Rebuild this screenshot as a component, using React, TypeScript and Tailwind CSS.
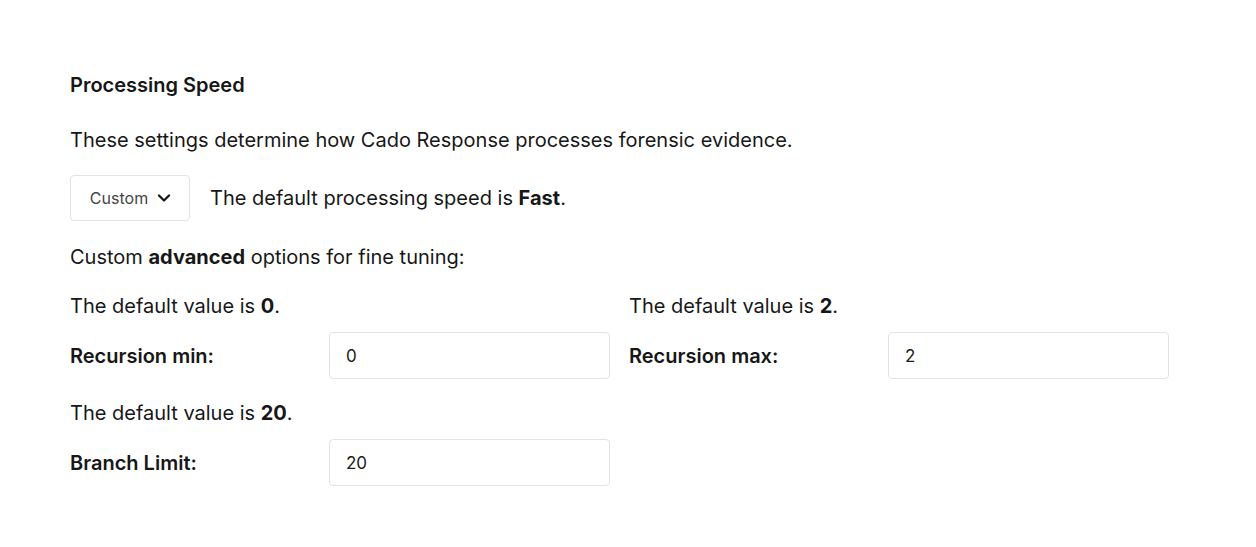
import { ChevronDown } from 'lucide-react';

function Field({ hint, label, value }: { hint: string; label: string; value: string }) {
  return (
    <div className="flex flex-col">
      <p className="leading-7">
        The default value is <span className="font-bold">{hint}</span>.
      </p>
      <div className="mt-3 flex items-center">
        <label className="w-[259px] shrink-0 font-semibold leading-7">{label}</label>
        <input
          readOnly
          value={value}
          className="h-[47px] w-[281px] shrink-0 rounded border border-[#e3e3e3] bg-white px-4 text-[17px] text-[#1b1b1b] outline-none"
        />
      </div>
    </div>
  );
}

export default function App() {
  return (
    <div className="min-h-[547px] bg-white px-[70px] pt-[71px] text-[20px] text-[#171717] font-['Inter',sans-serif]">
      <h2 className="font-semibold leading-7">Processing Speed</h2>
      <p className="mt-[27px] leading-7">These settings determine how Cado Response processes forensic evidence.</p>

      <div className="mt-[21px] flex items-center gap-5">
        <button className="flex h-[46px] w-[120px] items-center justify-center gap-[6px] rounded border border-[#e3e3e3] bg-white pl-1 text-[16px] text-[#444]">
          Custom
          <ChevronDown size={20} strokeWidth={2.75} className="text-[#171717]" />
        </button>
        <p className="leading-7">
          The default processing speed is <span className="font-bold">Fast</span>.
        </p>
      </div>

      <p className="mt-[22px] leading-7">
        Custom <span className="font-bold">advanced</span> options for fine tuning:
      </p>

      <div className="mt-[21px] grid w-[1099px] grid-cols-2 gap-x-[19px] gap-y-5">
        <Field hint="0" label="Recursion min:" value="0" />
        <Field hint="2" label="Recursion max:" value="2" />
        <Field hint="20" label="Branch Limit:" value="20" />
      </div>
    </div>
  );
}
